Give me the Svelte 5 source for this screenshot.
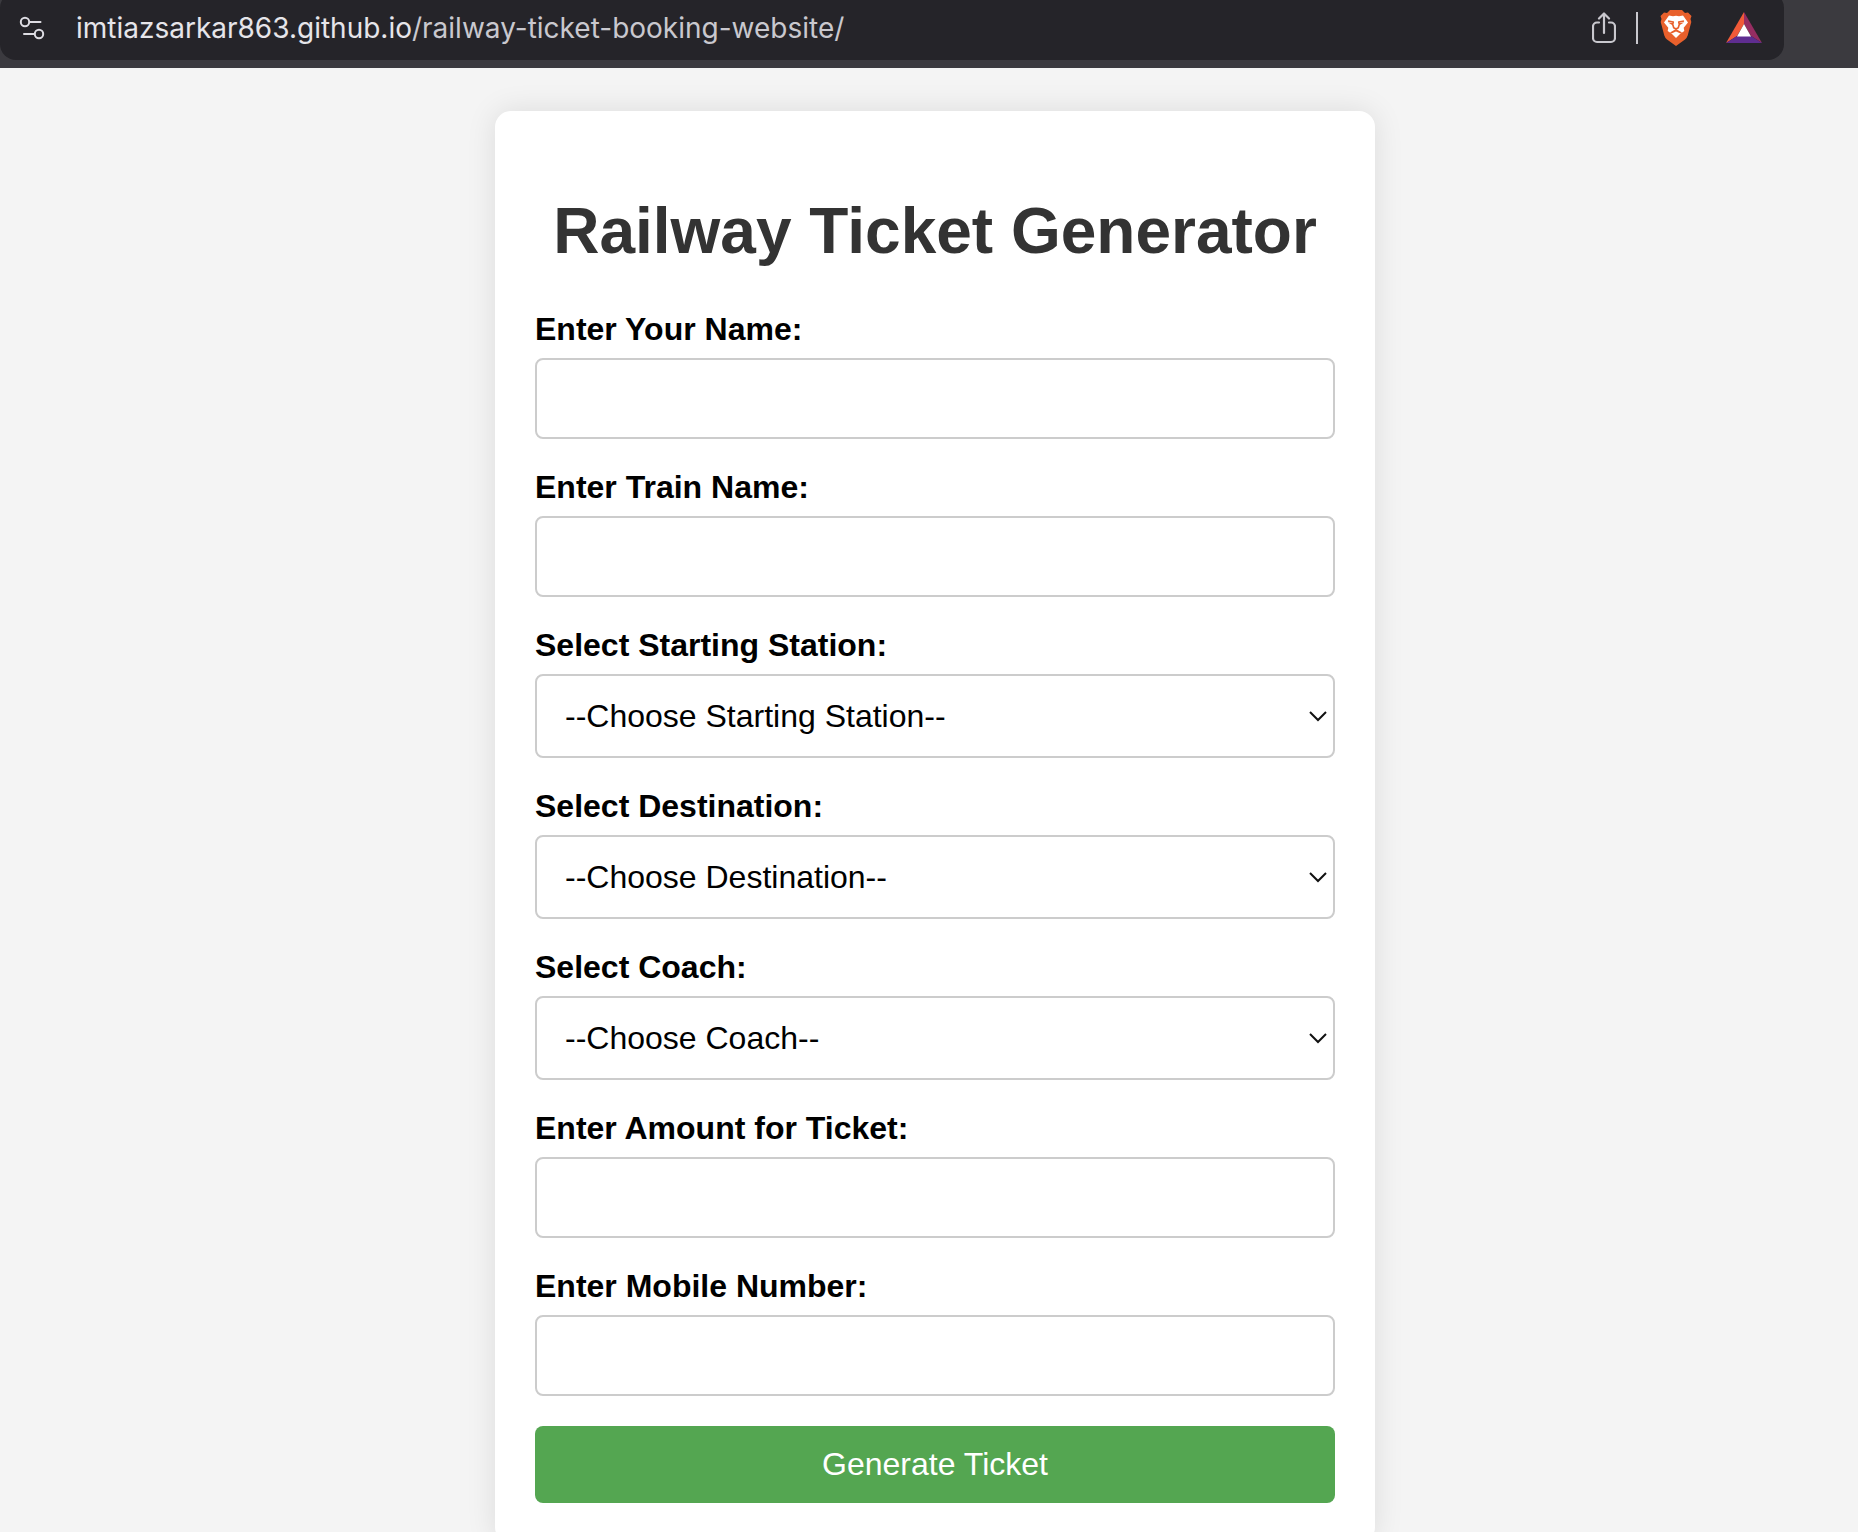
<script>
  const stations = ['Dhaka', 'Chattogram', 'Sylhet', 'Rajshahi', 'Khulna'];
  const fields = [
    { id: 'name', label: 'Enter Your Name:', type: 'text' },
    { id: 'train', label: 'Enter Train Name:', type: 'text' },
    { id: 'start', label: 'Select Starting Station:', prompt: '--Choose Starting Station--', options: stations },
    { id: 'destination', label: 'Select Destination:', prompt: '--Choose Destination--', options: stations },
    { id: 'coach', label: 'Select Coach:', prompt: '--Choose Coach--', options: ['AC', 'Non-AC', 'Sleeper'] },
    { id: 'amount', label: 'Enter Amount for Ticket:', type: 'text' },
    { id: 'mobile', label: 'Enter Mobile Number:', type: 'tel' }
  ];

  let values = $state({ name: '', train: '', start: '', destination: '', coach: '', amount: '', mobile: '' });
</script>

<div class="window">
  <header class="toolbar">
    <div class="address">
      <button class="icon" aria-label="Site settings">
        <svg width="28" height="28" viewBox="0 0 28 28" fill="none" stroke="#dedde3" stroke-width="2" stroke-linecap="round">
          <circle cx="7" cy="8" r="4.200" />
          <path d="M12 8h10.500M6 20h10" />
          <circle cx="21" cy="20" r="4.200" />
        </svg>
      </button>
      <div class="url"><span class="host">imtiazsarkar863.github.io</span>/railway-ticket-booking-website/</div>
      <button class="icon" aria-label="Share">
        <svg width="24" height="32" viewBox="0 0 24 32" fill="none" stroke="#c9c8ce" stroke-width="2.200" stroke-linecap="round" stroke-linejoin="round">
          <path d="M12 21V2M7 6.500l5-5 5 5" />
          <path d="M7 10.500H5a4 4 0 0 0-4 4V26a4 4 0 0 0 4 4h14a4 4 0 0 0 4-4V14.500a4 4 0 0 0-4-4h-2" />
        </svg>
      </button>
      <span class="rule"></span>
      <button class="icon shield" aria-label="Shields">
        <svg width="32" height="36" viewBox="0 0 32 36">
          <path fill="#e8602c" d="M10 0h12l3 3 3-.5L31.500 6l-1 3 .8 3-3.600 13.500q-.8 2.500-2.700 4L16 36l-9-6.500q-1.900-1.500-2.700-4L.7 12l.8-3-1-3L4 2.500l3 .5z" />
          <path fill="#fff" d="M9 5.500l4 .8 3-.5 3 .5 4-.8 5 7-4.300 5.200.6 3.300-4.300 3L16 28l-4-4-4.300-3 .6-3.300L4 12.500z" />
          <path fill="none" stroke="#e8602c" stroke-width="1.600" stroke-linejoin="round" d="M8 11l5.300 1-.6 2.200 1 3.500L16 19l2.300-1.300 1-3.500-.6-2.200 5.300-1" />
          <path fill="#e8602c" d="M8 12.500l5 .5v2.500zM24 12.500l-5 .5v2.500zM10 22.500l6-3.500 6 3.500-1.500 1-4.500-2-4.500 2z" />
        </svg>
      </button>
      <button class="icon rewards" aria-label="Rewards">
        <svg width="36" height="32" viewBox="0 0 36 32">
          <path fill="#f15a38" d="M18 0v12L11 24 0 31z" />
          <path fill="#962d62" d="M18 0l18 31-11-7-7-12z" />
          <path fill="#5f2d90" d="M0 31l11-7h14l11 7z" />
          <path fill="#fff" d="M18 12l7 12.500H11z" />
        </svg>
      </button>
    </div>
  </header>

  <main>
    <form class="card" onsubmit={(e) => e.preventDefault()}>
      <h1>Railway Ticket Generator</h1>
      {#each fields as field (field.id)}
        <label for={field.id}>{field.label}</label>
        {#if field.options}
          <div class="select">
            <select id={field.id} bind:value={values[field.id]}>
              <option value="">{field.prompt}</option>
              {#each field.options as option}
                <option value={option}>{option}</option>
              {/each}
            </select>
            <svg width="18" height="12" viewBox="0 0 18 12" fill="none" stroke="#111" stroke-width="2" aria-hidden="true">
              <path d="M1 2l8 8 8-8" />
            </svg>
          </div>
        {:else}
          <input id={field.id} type={field.type} bind:value={values[field.id]} />
        {/if}
      {/each}
      <button class="submit" type="submit">Generate Ticket</button>
    </form>
  </main>
</div>

<style>
  :global(body) {
    margin: 0;
    background: #f4f4f4;
  }

  .window {
    display: flex;
    flex-direction: column;
    height: 100vh;
    font-family: 'Liberation Sans', Arial, sans-serif;
    font-size: 32px;
    line-height: 37px;
  }

  .toolbar {
    flex: none;
    overflow: hidden;
    padding: 0 74px 8px 0;
    background: #3b3a3f;
  }

  .address {
    display: flex;
    align-items: center;
    height: 52px;
    margin-top: -8px;
    padding: 10px 22px 6px 18px;
    border-radius: 16px;
    background: #252429;
  }

  .icon {
    display: flex;
    padding: 0;
    border: 0;
    background: none;
  }

  .url {
    flex: 1;
    min-width: 0;
    margin-left: 30px;
    overflow: hidden;
    white-space: nowrap;
    font-family: Inter, sans-serif;
    font-size: 28px;
    line-height: 40px;
    color: #c9c8ce;
  }

  .host {
    color: #e6e5ea;
  }

  .rule {
    width: 2px;
    height: 32px;
    margin: 0 22px 0 20px;
    background: #c9c8ce;
  }

  .rewards {
    margin-left: 34px;
  }

  main {
    flex: 1;
    min-height: 0;
    overflow-y: auto;
    scrollbar-width: none;
    padding: 43px 0 40px 12px;
  }

  .card {
    box-sizing: border-box;
    max-width: 880px;
    margin: 0 auto;
    padding: 40px;
    border-radius: 16px;
    background: #fff;
    box-shadow: 0 0 30px rgba(0, 0, 0, 0.1);
  }

  h1 {
    margin: 43px 0;
    text-align: center;
    font-size: 64px;
    line-height: 74px;
    color: #333;
  }

  label {
    display: block;
    margin-bottom: 10px;
    font-weight: bold;
    color: #000;
  }

  input,
  select,
  .submit {
    display: block;
    box-sizing: border-box;
    width: 100%;
    border-radius: 8px;
    font: inherit;
  }

  input {
    height: 81px;
    margin: 0 0 30px;
    padding: 20px;
    border: 2px solid #ccc;
    background: #fff;
  }

  .select {
    display: grid;
    align-items: center;
    margin-bottom: 30px;
  }

  .select > * {
    grid-area: 1 / 1;
  }

  .select svg {
    justify-self: end;
    margin-right: 8px;
    pointer-events: none;
  }

  select {
    appearance: none;
    height: 84px;
    padding: 0 28px;
    border: 2px solid #ccc;
    background: #fff;
    color: #000;
  }

  .submit {
    padding: 20px;
    border: 0;
    background: #54a651;
    color: #fff;
    cursor: pointer;
  }
</style>
